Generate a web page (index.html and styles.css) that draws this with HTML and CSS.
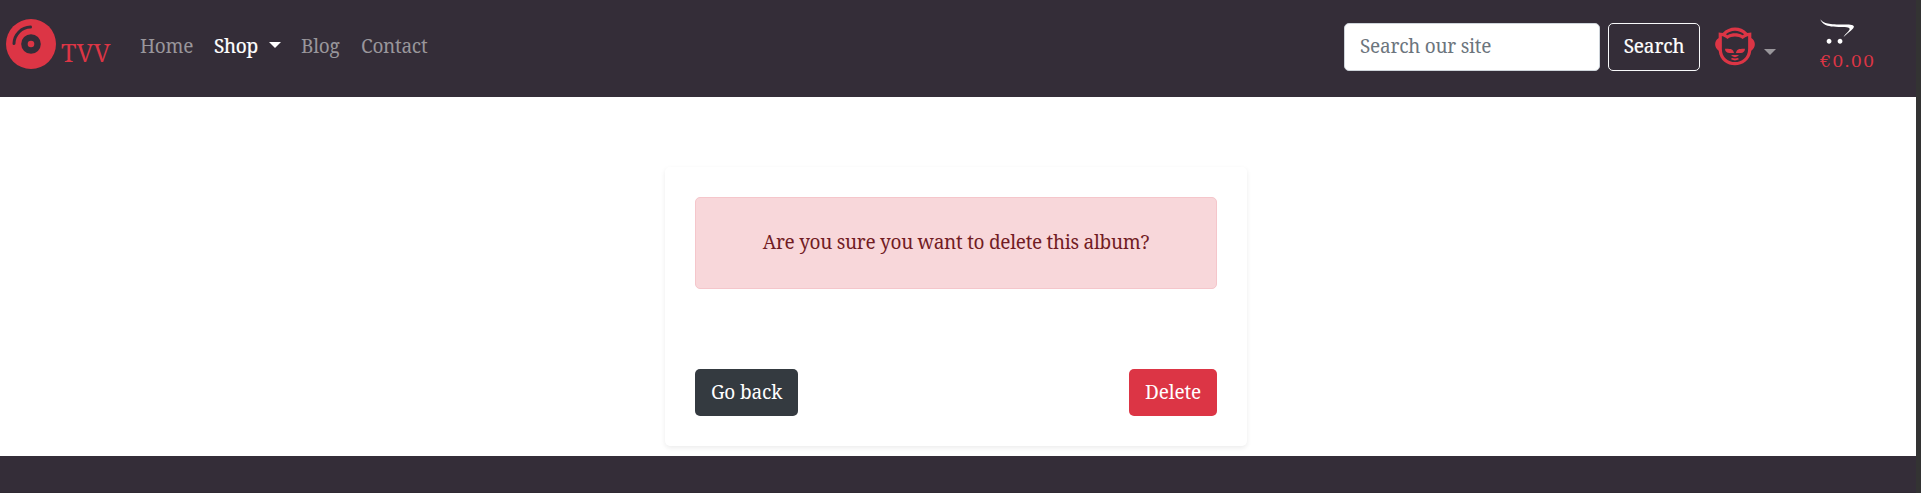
FILE: index.html
```html
<!DOCTYPE html>
<html lang="en">
<head>
<meta charset="utf-8">
<title>TVV</title>
<link rel="stylesheet" href="styles.css">
</head>
<body>
<div class="page">
  <nav class="navbar">
    <a class="brand">
      <svg class="disc" viewBox="0 0 50 50">
        <circle cx="25" cy="25" r="25" fill="#dc3545"/>
        <circle cx="25" cy="25" r="9.8" fill="#342d38"/>
        <circle cx="25" cy="25" r="3.3" fill="#dc3545"/>
        <path d="M8 24.5A17 17 0 0 1 24.5 8" fill="none" stroke="#342d38" stroke-width="3" stroke-linecap="round"/>
      </svg>
      <span class="brand-name">TVV</span>
    </a>
    <div class="links">
      <a class="home">Home</a>
      <a class="active"><span class="shop">Shop</span><i class="caret"></i></a>
      <a class="blog">Blog</a>
      <a class="contact">Contact</a>
    </div>
    <form class="search">
      <input class="field" type="text" placeholder="Search our site">
      <button class="btn outline" type="button">Search</button>
    </form>
    <a class="user">
      <svg class="napster" viewBox="0 0 496 512"><path fill="#dc3545" d="M298.3 373.6c-14.2 13.6-31.3 24.1-50.4 30.5-19-6.4-36.2-16.9-50.3-30.5h100.7zm44-199.6c20-16.9 43.6-29.2 69.6-36.2V299c0 219.4-328 217.6-328 .3V137.7c25.9 6.9 49.6 19.6 69.5 36.4 56.8-40 132.5-39.9 188.9-.1zm-208.8-58.5c64.4-60 164.3-60.1 228.9-.2-7.1 3.5-13.9 7.3-20.6 11.5-58.7-30.5-129.2-30.4-187.9.1-6.3-4-13.9-8.2-20.4-11.4zM43.8 93.2v69.3c-58.4 36.5-58.4 121.1.1 158.3 26.4 245.1 381.7 240.3 407.6 1.5l.3-1.7c58.7-36.3 58.9-121.7.2-158.2V93.2c-17.3.5-34 3-50.1 7.4-82-91.5-225.5-91.5-307.5.1-16.3-4.4-33.1-7-50.6-7.5zM259.2 352s36-.3 61.3-1.5c10.2-.5 21.1-4 25.5-6.5 26.3-15.1 25.4-39.2 26.2-47.4-79.5-.6-99.9 3.9-113 55.4zm-135.5-55.3c.8 8.2-.1 32.3 26.2 47.4 4.4 2.5 15.2 6 25.5 6.5 25.3 1.1 61.3 1.5 61.3 1.5-13.2-51.4-33.7-56-113-55.4zm169.1 123.4c-3.2-5.3-6.9-7.3-6.9-7.3-24.8 7.3-52.2 6.9-75.9 0 0 0-2.9 1.3-6.4 6.6-2.8 4.1-3.7 9.6-3.7 9.6 29.1 17.6 67.1 17.6 96.2 0-.1-.1-.3-4-3.3-8.9z"/></svg>
      <i class="caret"></i>
    </a>
    <a class="cart">
      <svg class="cart-icon" viewBox="0 0 640 512"><path fill="#fff" d="M423.3 440.7c0 25.3-20.3 45.6-45.6 45.6s-45.8-20.3-45.8-45.6 20.6-45.8 45.8-45.8c25.4 0 45.6 20.5 45.6 45.8zm-253.9-45.8c-25.3 0-45.6 20.6-45.6 45.8s20.3 45.6 45.6 45.6 45.8-20.3 45.8-45.6-20.5-45.8-45.8-45.8zm291.7-270C158.9 124.9 81.9 112.1 0 25.7c34.4 51.7 53.3 148.9 373.1 144.2 333.3-5 130 86.1 70.8 188.9 186.7-166.7 319.4-233.9 17.2-233.9z"/></svg>
      <span class="price">€0.00</span>
    </a>
  </nav>
  <main class="main">
    <section class="card">
      <div class="alert"><span>Are you sure you want to delete this album?</span></div>
      <div class="actions">
        <button class="btn dark" type="button">Go back</button>
        <button class="btn danger" type="button">Delete</button>
      </div>
    </section>
  </main>
  <footer class="footer"></footer>
</div>
</body>
</html>
```
FILE: styles.css
```css
* { box-sizing: border-box; }
body {
  margin: 0;
  background: #333;
  font-family: "Noto Serif", "Liberation Serif", serif;
  font-size: 19px;
  letter-spacing: -.28px;
  line-height: 30px;
  overflow: hidden;
}
.page { display: flex; flex-direction: column; width: 1916px; height: 493px; background: #fff; }
svg { display: block; }
.navbar { display: flex; flex: none; height: 97px; background: #342d38; }
.brand { display: flex; width: 140px; padding: 19px 0 0 6px; color: #dc3545; }
.disc { width: 50px; height: 50px; }
.brand-name { margin: 18px 0 0 5px; font-size: 25px; letter-spacing: .2px; }
.links { display: flex; gap: 20px; padding-top: 31px; color: #99969b; }
.links a { display: flex; }
.active { color: #fff; }
.home { width: 54px; }
.shop { width: 45px; -webkit-text-stroke: .2px #fff; }
.blog { width: 40px; }
.caret {
  width: 0; height: 0;
  border: 6px solid transparent;
  border-top-color: currentColor;
  border-bottom: 0;
}
.active .caret { margin: 11px 0 0 10px; }
.search { display: flex; gap: 8px; margin: 23px 0 0 auto; }
.field {
  width: 256px; height: 48px; padding: 0 15px 3px;
  border: 1px solid #ced4da; border-radius: 5px;
  font: inherit; letter-spacing: -.25px; background: #fff;
}
.field::placeholder { color: #6c757d; opacity: 1; }
.btn {
  height: 47px; padding: 0 0 2px; border: 0; border-radius: 5px;
  font: inherit; letter-spacing: -.15px; color: #fff; white-space: nowrap;
}
.outline { width: 92px; height: 48px; border: 1px solid #f8f9fa; background: transparent; -webkit-text-stroke: .2px #fff; }
.user { display: flex; width: 120px; padding: 25px 0 0 15px; color: #99969b; }
.napster { width: 40px; height: 41px; }
.user .caret { margin: 24px 0 0 9px; }
.cart { display: flex; flex-direction: column; width: 96px; padding: 18px 0 0; color: #dc3545; }
.cart-icon { width: 42px; height: 27px; margin-left: -4px; }
.price { margin-top: 1px; font-family: "DejaVu Serif", serif; font-size: 17.5px; letter-spacing: 1px; }
.main { display: flex; justify-content: center; height: 359px; padding: 70px 4px 0 0; }
.card {
  width: 582px; height: 279px; padding: 30px; border-radius: 5px;
  background: #fff; box-shadow: 0 2px 5px rgba(0, 0, 0, .08);
}
.alert {
  display: flex; justify-content: center; align-items: center; height: 92px; padding-bottom: 2px;
  border: 1px solid #f5c6cb; border-radius: 5px; background: #f8d7da; color: #721c24;
}
.actions { display: flex; justify-content: space-between; margin-top: 80px; }
.dark { width: 103px; background: #343a40; }
.danger { width: 88px; background: #dc3545; }
.footer { flex: 1; background: #342d38; border-bottom: 1px solid #302933; }
```
